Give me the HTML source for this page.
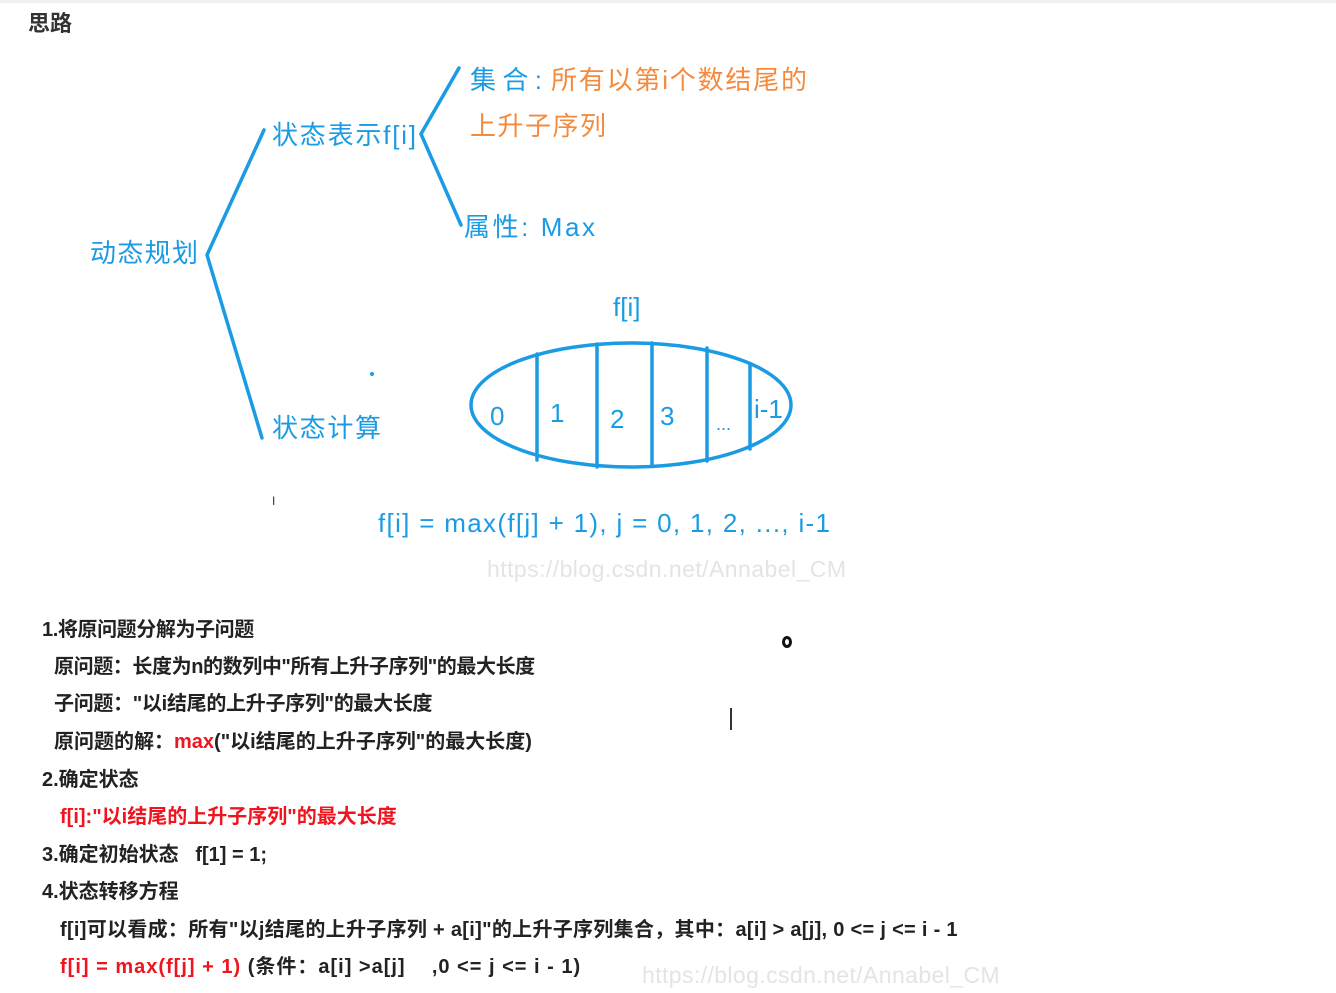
<!DOCTYPE html>
<html><head><meta charset="utf-8"><style>
body{margin:0;width:1336px;height:993px;background:#fff;position:relative;overflow:hidden;font-family:"Liberation Sans","Noto Sans CJK SC",sans-serif}
.top{position:absolute;left:0;top:0;width:1336px;height:3px;background:#f0f0f0}
.t{position:absolute;white-space:nowrap;font-weight:bold;font-size:20px;color:#222;line-height:24px}
.r{color:#f0141e}
</style></head><body>
<div class="top"></div>
<div class="t" style="left:28px;top:12px;font-size:22px;color:#333">思路</div>
<svg width="1336" height="600" style="position:absolute;left:0;top:0" font-family="Liberation Sans,Noto Sans CJK SC,sans-serif">
<g stroke="#1a9be3" stroke-width="3.5" fill="none" stroke-linecap="round">
<path d="M264 130 L207 255 L262 438"/>
<path d="M459 68 L421 134 L461 225"/>
<ellipse cx="631" cy="405" rx="160" ry="62"/>
<path d="M537 354V460 M597 344V467 M652 343V466 M707 348V461 M750 364V449"/>
</g>
<g fill="#1a9be3" font-size="26">
<text x="90" y="262" textLength="108">动态规划</text>
<text x="272" y="144" textLength="144">状态表示f[i]</text>
<text x="464" y="236" textLength="131">属性: Max</text>
<text x="470" y="89" textLength="72">集合:</text>
<text x="272" y="437" textLength="109">状态计算</text>
<text x="613" y="316">f[i]</text>
<text x="490" y="425">0</text>
<text x="550" y="422">1</text>
<text x="610" y="428">2</text>
<text x="660" y="425">3</text>
<text x="716" y="430" font-size="18">...</text>
<text x="754" y="418">i-1</text>
<text x="378" y="532" textLength="452">f[i] = max(f[j] + 1), j = 0, 1, 2, ..., i-1</text>
</g>
<circle cx="372" cy="374" r="2" fill="#1a9be3"/>
<g fill="#f58a3c" font-size="26">
<text x="551" y="89" textLength="256">所有以第i个数结尾的</text>
<text x="470" y="135" textLength="136">上升子序列</text>
</g>
<text x="487" y="577" fill="#e4e4e4" font-size="23" textLength="359">https://blog.csdn.net/Annabel_CM</text>
<text x="272" y="505" fill="#333" font-size="12">I</text>
</svg>
<div class="t" style="left:42px;top:618px;letter-spacing:-0.4px">1.将原问题分解为子问题</div>
<div class="t" style="left:54px;top:655px;letter-spacing:-0.4px">原问题：长度为n的数列中"所有上升子序列"的最大长度</div>
<div class="t" style="left:54px;top:692px;letter-spacing:-0.3px">子问题："以i结尾的上升子序列"的最大长度</div>
<div class="t" style="left:54px;top:730px">原问题的解：<span class="r">max</span>("以i结尾的上升子序列"的最大长度)</div>
<div class="t" style="left:42px;top:768px">2.确定状态</div>
<div class="t r" style="left:60px;top:805px">f[i]:"以i结尾的上升子序列"的最大长度</div>
<div class="t" style="left:42px;top:843px">3.确定初始状态&nbsp;&nbsp; f[1] = 1;</div>
<div class="t" style="left:42px;top:880px">4.状态转移方程</div>
<div class="t" style="left:60px;top:918px;letter-spacing:0.3px">f[i]可以看成：所有"以j结尾的上升子序列 + a[i]"的上升子序列集合，其中：a[i] &gt; a[j], 0 &lt;= j &lt;= i - 1</div>
<div class="t" style="left:60px;top:955px;letter-spacing:1px"><span class="r">f[i] = max(f[j] + 1)</span> (条件：a[i] &gt;a[j]&nbsp;&nbsp;&nbsp; ,0 &lt;= j &lt;= i - 1)</div>
<div style="position:absolute;left:642px;top:962px;font-size:23px;color:#e4e4e4;font-family:'Liberation Sans',sans-serif;letter-spacing:0.4px">https://blog.csdn.net/Annabel_CM</div>
<div style="position:absolute;left:782px;top:636px;width:10px;height:12px;border:3px solid #111;border-radius:50%;box-sizing:border-box"></div>
<div style="position:absolute;left:730px;top:708px;width:2px;height:22px;background:#333"></div>
</body></html>
